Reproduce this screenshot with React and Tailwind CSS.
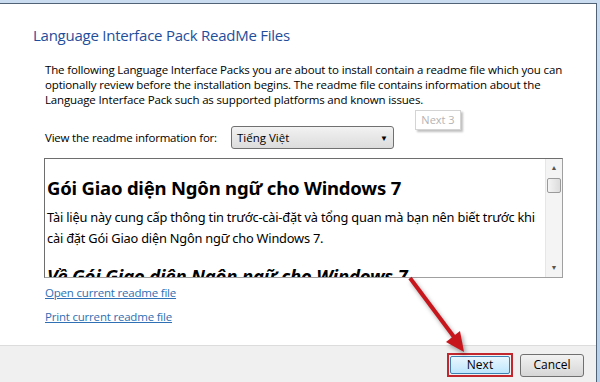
import React from 'react';

const ui = { fontFamily: '"Open Sans", "Noto Sans", sans-serif' };

const RedArrow = () => (
	<svg
		className="absolute left-0 top-0 pointer-events-none"
		width="600"
		height="382"
		style={ { filter: 'drop-shadow(2px 3px 2px rgba(0,0,0,0.35))' } }
	>
		<line x1="410" y1="278" x2="454" y2="337" stroke="#c8161d" strokeWidth="4" />
		<polygon points="464,352 460,331 446,342" fill="#c8161d" />
	</svg>
);

const Scrollbar = () => (
	<div className="w-[17px] flex flex-col bg-[#f4f4f4] border-l border-[#e6e6e6]">
		<div className="h-[19px] flex items-center justify-center text-[7px] text-[#555]">▲</div>
		<div className="mx-[1px] h-[15px] rounded-[2px] border border-[#9a9a9a] bg-gradient-to-r from-[#f4f4f4] to-[#dcdcdc]" />
		<div className="flex-1" />
		<div className="h-[17px] flex items-center justify-center text-[7px] text-[#555]">▼</div>
	</div>
);

export default function App() {
	return (
		<div className="relative w-[600px] h-[382px] overflow-hidden bg-gradient-to-b from-[#c9dcf0] to-[#b7cfe9]" style={ ui }>
			<div className="mt-[3px] mr-[3px] h-[379px] flex flex-col bg-white border-t border-r border-[#4f6276]">
				<div className="flex-1 flex flex-col">
					<div className="pl-[33px] pt-[21px] text-[15px] leading-[20px] text-[#1f4e9c] whitespace-nowrap tracking-[-0.25px]">
						Language Interface Pack ReadMe Files
					</div>
					<div className="pl-[45px] pt-[17px] text-[11.5px] leading-[15px] text-black whitespace-nowrap tracking-[-0.15px]">
						<div>The following Language Interface Packs you are about to install contain a readme file which you can</div>
						<div>optionally review before the installation begins. The readme file contains information about the</div>
						<div>Language Interface Pack such as supported platforms and known issues.</div>
					</div>
					<div className="relative pl-[45px] pt-[19px] flex items-center">
						<span className="w-[186px] text-[11.5px] tracking-[-0.2px] text-black whitespace-nowrap">
							View the readme information for:
						</span>
						<div className="w-[163px] h-[23px] flex items-center justify-between pl-[5px] pr-[5px] rounded-[3px] border border-[#707070] bg-gradient-to-b from-[#f2f2f2] to-[#dcdcdc] text-[11.5px] text-black">
							<span>Tiếng Việt</span>
							<span className="text-[8px] text-black">▼</span>
						</div>
						<div className="absolute left-[415px] top-[3px] w-[46px] h-[20px] flex items-center justify-center border border-[#d4d4d4] bg-white text-[11px] text-[#b4b4b4] shadow-[2px_2px_2px_rgba(0,0,0,0.25)]">
							Next 3
						</div>
					</div>
					<div className="ml-[44px] mt-[9px] w-[519px] h-[120px] shrink-0 flex border border-[#a0a0a0] border-t-[#6e6e6e] border-l-[#6e6e6e] bg-white overflow-hidden">
						<div className="flex-1 overflow-hidden pl-[2px] pt-[18px] whitespace-nowrap text-black" style={ { fontFamily: '"Noto Sans", "Open Sans", sans-serif' } }>
							<div className="text-[18.5px] leading-[22px] font-bold tracking-[-0.2px]">Gói Giao diện Ngôn ngữ cho Windows 7</div>
							<div className="mt-[8px] text-[12.8px] leading-[21px] tracking-[-0.2px]">
								<div>Tài liệu này cung cấp thông tin trước-cài-đặt và tổng quan mà bạn nên biết trước khi</div>
								<div>cài đặt Gói Giao diện Ngôn ngữ cho Windows 7.</div>
							</div>
							<div className="mt-[16px] text-[18.5px] leading-[22px] font-bold italic tracking-[-0.2px]">Về Gói Giao diện Ngôn ngữ cho Windows 7</div>
						</div>
						<Scrollbar />
					</div>
					<div className="pl-[45px] pt-[7px] text-[11.5px] leading-[15px] tracking-[-0.2px] text-[#2f6fb3] underline flex flex-col gap-[9px]">
						<span>Open current readme file</span>
						<span>Print current readme file</span>
					</div>
				</div>
				<div className="h-[37px] shrink-0 flex items-center justify-end gap-[7px] pr-[12px] bg-[#f0f0f0] border-t border-[#dcdcdc]">
					<div className="mt-[2px] border-2 border-[#c1272d] p-[1px]">
						<div className="w-[60px] h-[18px] flex items-center justify-center rounded-[2px] border border-[#3c7fb1] bg-gradient-to-b from-[#eaf6fd] to-[#bee6fd] text-[12px] text-black">
							Next
						</div>
					</div>
					<div className="mt-[2px] w-[64px] h-[23px] flex items-center justify-center rounded-[3px] border border-[#707070] bg-gradient-to-b from-[#f2f2f2] to-[#d6d6d6] text-[12px] text-black">
						Cancel
					</div>
				</div>
			</div>
			<RedArrow />
		</div>
	);
}
